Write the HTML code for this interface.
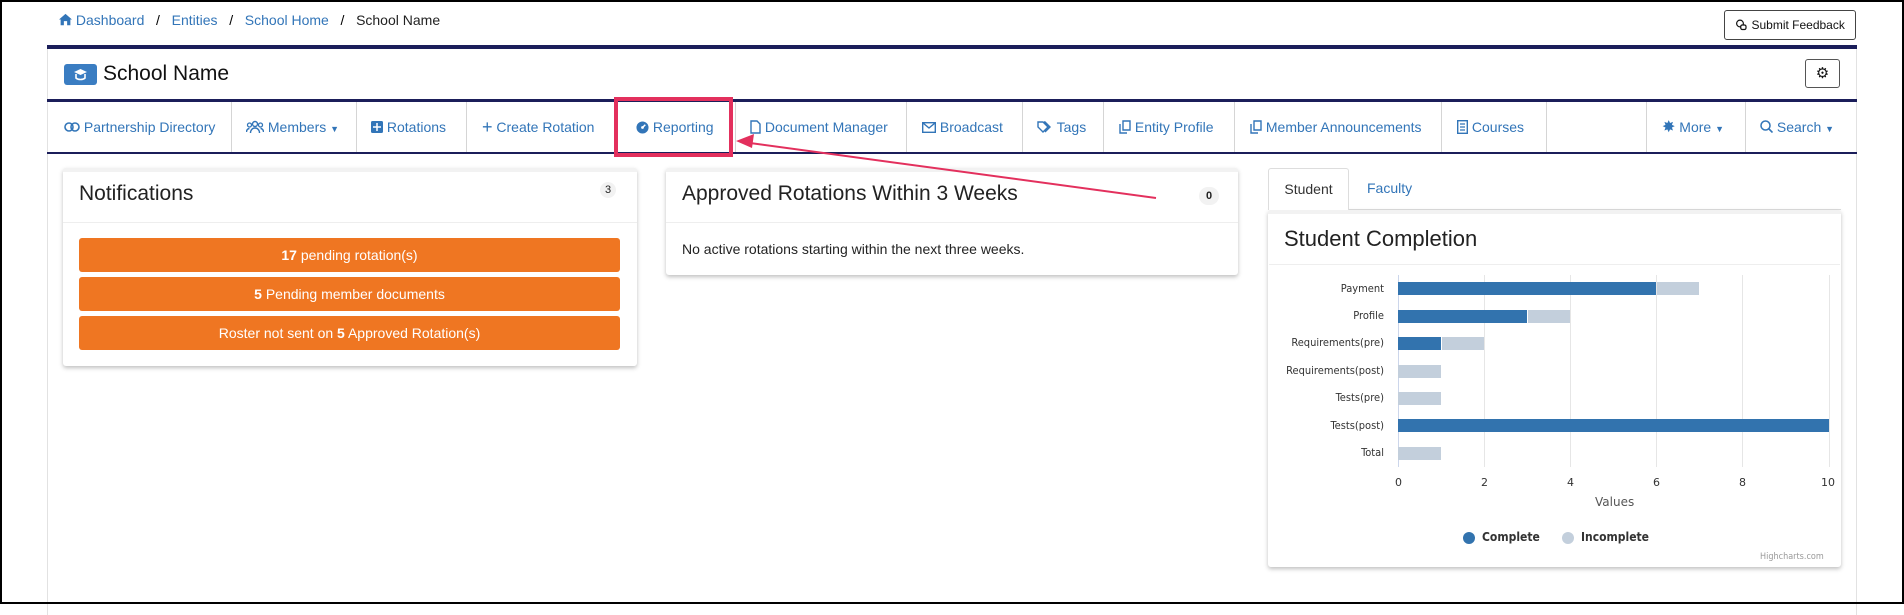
<!DOCTYPE html>
<html><head><meta charset="utf-8"><style>
*{box-sizing:border-box;margin:0;padding:0}
body{width:1904px;height:604px;overflow:hidden;background:#fff;font-family:"Liberation Sans",sans-serif;position:relative}
.a{position:absolute}
.blue{color:#3275b8}
.nav{position:absolute;top:102px;height:50px;left:48px;width:1808px}
.ni{position:absolute;top:0;height:50px;line-height:50px;font-size:14px;color:#3275b8;white-space:nowrap}
.sep{position:absolute;top:0;width:1px;height:50px;background:#d5d5d5}
.btn{position:absolute;left:79px;width:541px;height:34px;background:#ef7622;border-radius:3px;color:#fff;font-size:14px;text-align:center;line-height:34px}
.lbl{position:absolute;font-size:11px;color:#333;text-align:right;width:140px;font-family:"DejaVu Sans Condensed","DejaVu Sans",sans-serif}
.bar{position:absolute;height:13px}
.c{background:#3273ae}.i{background:#c3cfdc}
.tick{position:absolute;top:476px;font-size:11px;color:#333;font-family:"DejaVu Sans",sans-serif}
.grid{position:absolute;top:275px;height:192px;width:1px;background:#e6e6e6}
</style></head><body>
<div class="a" style="left:0;top:0;width:1904px;height:604px;border:2px solid #000;z-index:50;pointer-events:none"></div>
<div class="a" style="left:59px;top:12px;font-size:14px;white-space:nowrap">
<svg width="13" height="13" viewBox="0 0 16 16" style="vertical-align:-1px"><path d="M8 1L0 8h2v7h4v-5h4v5h4V8h2z" fill="#3275b8"/></svg>
<span class="blue">Dashboard</span>&nbsp;&nbsp; / &nbsp;&nbsp;<span class="blue">Entities</span>&nbsp;&nbsp; / &nbsp;&nbsp;<span class="blue">School Home</span>&nbsp;&nbsp; / &nbsp;&nbsp;<span style="color:#222">School Name</span></div>
<div class="a" style="left:1724px;top:10px;width:132px;height:30px;border:1px solid #444;border-radius:3px;font-size:12px;line-height:28px;text-align:center;color:#111">
<svg width="13" height="12" viewBox="0 0 16 16" style="vertical-align:-2px"><circle cx="6" cy="6" r="4.5" fill="none" stroke="#111" stroke-width="1.6"/><rect x="7" y="8" width="7" height="6" rx="2" fill="#fff" stroke="#111" stroke-width="1.6"/></svg> Submit Feedback</div>
<div class="a" style="left:47px;top:45px;width:1810px;height:570px;border-left:1px solid #e2e2e2;border-right:1px solid #e2e2e2"></div>
<div class="a" style="left:47px;top:45px;width:1810px;height:4px;background:#1b1e5a"></div>
<div class="a" style="left:64px;top:64px;width:33px;height:21px;background:#3a7dc2;border-radius:3px"><svg width="33" height="21" viewBox="0 0 33 21"><path d="M10 8l6.5-3 6.5 3-6.5 3z" fill="#fff"/><path d="M12 10v4c2 2 7 2 9 0v-4" fill="none" stroke="#fff" stroke-width="1.6"/></svg></div>
<div class="a" style="left:103px;top:62px;font-size:21px;color:#111">School Name</div>
<div class="a" style="left:1805px;top:59px;width:35px;height:29px;border:1px solid #555;border-radius:3px;text-align:center;line-height:27px;font-size:15px;color:#111">⚙</div>
<div class="a" style="left:47px;top:99px;width:1810px;height:3px;background:#1b1e5a"></div>
<div class="a" style="left:47px;top:152px;width:1810px;height:2px;background:#1b1e5a"></div>
<div class="nav">
<div class="ni" style="left:16px"><svg width="16" height="14" viewBox="0 0 16 14" style="vertical-align:-2px"><rect x="1" y="3" width="8" height="8" rx="4" fill="none" stroke="#3275b8" stroke-width="1.6"/><rect x="7" y="3" width="8" height="8" rx="4" fill="none" stroke="#3275b8" stroke-width="1.6"/></svg> Partnership Directory</div>
<div class="sep" style="left:183px"></div>
<div class="ni" style="left:198px"><svg width="18" height="14" viewBox="0 0 18 14" style="vertical-align:-2px"><circle cx="9" cy="4" r="2.5" fill="none" stroke="#3275b8" stroke-width="1.4"/><circle cx="3.5" cy="5" r="2" fill="none" stroke="#3275b8" stroke-width="1.3"/><circle cx="14.5" cy="5" r="2" fill="none" stroke="#3275b8" stroke-width="1.3"/><path d="M4.5 13c0-3 2-5 4.5-5s4.5 2 4.5 5M0.5 12c0-2 1.3-3.5 3-3.5M17.5 12c0-2-1.3-3.5-3-3.5" fill="none" stroke="#3275b8" stroke-width="1.4"/></svg> Members <span style="font-size:9px">▼</span></div>
<div class="sep" style="left:308px"></div>
<div class="ni" style="left:323px"><svg width="12" height="12" viewBox="0 0 12 12" style="vertical-align:-1px"><rect width="12" height="12" rx="1.5" fill="#3275b8"/><path d="M6 2v8M2 6h8" stroke="#fff" stroke-width="1.5"/></svg> Rotations</div>
<div class="sep" style="left:418px"></div>
<div class="ni" style="left:434px"><span style="font-size:18px;vertical-align:-1px">+</span> Create Rotation</div>
<div class="sep" style="left:566px"></div>
<div class="ni" style="left:588px"><svg width="13" height="13" viewBox="0 0 14 14" style="vertical-align:-2px"><circle cx="7" cy="7" r="6.5" fill="#3275b8"/><path d="M7 7l3-3" stroke="#fff" stroke-width="1.6"/><circle cx="7" cy="7" r="1.5" fill="#fff"/></svg> Reporting</div>
<div class="sep" style="left:687px"></div>
<div class="ni" style="left:702px"><svg width="11" height="14" viewBox="0 0 11 14" style="vertical-align:-2px"><path d="M1 1h6l3 3v9H1z" fill="none" stroke="#3275b8" stroke-width="1.4"/></svg> Document Manager</div>
<div class="sep" style="left:858px"></div>
<div class="ni" style="left:874px"><svg width="14" height="11" viewBox="0 0 14 11" style="vertical-align:-1px"><rect x="0.7" y="0.7" width="12.6" height="9.6" fill="none" stroke="#3275b8" stroke-width="1.4"/><path d="M1 1l6 5 6-5" fill="none" stroke="#3275b8" stroke-width="1.4"/></svg> Broadcast</div>
<div class="sep" style="left:974px"></div>
<div class="ni" style="left:989px"><svg width="16" height="12" viewBox="0 0 16 12" style="vertical-align:-1px"><path d="M1 1h5l5 5-5 5-5-5z M7 1h1l5 5-5 5" fill="none" stroke="#3275b8" stroke-width="1.4"/></svg> Tags</div>
<div class="sep" style="left:1055px"></div>
<div class="ni" style="left:1071px"><svg width="12" height="14" viewBox="0 0 12 14" style="vertical-align:-2px"><path d="M4 1h7v9H4zM1 4v9h7" fill="none" stroke="#3275b8" stroke-width="1.4"/></svg> Entity Profile</div>
<div class="sep" style="left:1186px"></div>
<div class="ni" style="left:1202px"><svg width="12" height="14" viewBox="0 0 12 14" style="vertical-align:-2px"><path d="M4 1h7v9H4zM1 4v9h7" fill="none" stroke="#3275b8" stroke-width="1.4"/></svg> Member Announcements</div>
<div class="sep" style="left:1393px"></div>
<div class="ni" style="left:1409px"><svg width="11" height="14" viewBox="0 0 11 14" style="vertical-align:-2px"><rect x="0.7" y="0.7" width="9.6" height="12.6" fill="none" stroke="#3275b8" stroke-width="1.4"/><path d="M3 4h5M3 7h5M3 10h5" stroke="#3275b8" stroke-width="1.3"/></svg> Courses</div>
<div class="sep" style="left:1498px"></div>
<div class="sep" style="left:1598px"></div>
<div class="ni" style="left:1614px"><span style="font-size:16px">✸</span> More <span style="font-size:9px">▼</span></div>
<div class="sep" style="left:1697px"></div>
<div class="ni" style="left:1712px"><svg width="13" height="13" viewBox="0 0 13 13" style="vertical-align:-1px"><circle cx="5.5" cy="5.5" r="4.5" fill="none" stroke="#3275b8" stroke-width="1.5"/><path d="M9 9l3.5 3.5" stroke="#3275b8" stroke-width="1.6"/></svg> Search <span style="font-size:9px">▼</span></div>
</div>
<div class="a" style="left:614px;top:97px;width:119px;height:60px;border:4px solid #e3305d;z-index:10"></div>
<svg class="a" style="left:0;top:0;z-index:11" width="1904" height="604"><line x1="1156" y1="198" x2="750" y2="143" stroke="#e3305d" stroke-width="2"/><path d="M736 141l18-7-2 14z" fill="#e3305d"/></svg>
<div class="a" style="left:63px;top:168px;width:574px;height:198px;border-top:4px solid #f2f2f2;box-shadow:0 2px 4px rgba(0,0,0,.25);border-radius:3px;background:#fff"></div>
<div class="a" style="left:79px;top:182px;font-size:21px;color:#222">Notifications</div>
<div class="a" style="left:600px;top:182px;width:16px;height:16px;border-radius:8px;background:#f2f2f2;font-size:11px;text-align:center;line-height:16px;color:#222">3</div>
<div class="a" style="left:63px;top:222px;width:574px;height:1px;background:#eee"></div>
<div class="btn" style="top:238px"><b>17</b> pending rotation(s)</div>
<div class="btn" style="top:277px"><b>5</b> Pending member documents</div>
<div class="btn" style="top:316px">Roster not sent on <b>5</b> Approved Rotation(s)</div>
<div class="a" style="left:666px;top:168px;width:572px;height:107px;border-top:4px solid #f2f2f2;box-shadow:0 2px 4px rgba(0,0,0,.25);border-radius:3px;background:#fff"></div>
<div class="a" style="left:682px;top:182px;font-size:21px;color:#222">Approved Rotations Within 3 Weeks</div>
<div class="a" style="left:1199px;top:187px;width:20px;height:18px;border-radius:9px;background:#f2f2f2;font-size:11px;font-weight:bold;text-align:center;line-height:18px;color:#222">0</div>
<div class="a" style="left:666px;top:222px;width:572px;height:1px;background:#eee"></div>
<div class="a" style="left:682px;top:241px;font-size:14px;color:#222">No active rotations starting within the next three weeks.</div>
<div class="a" style="left:1268px;top:168px;width:81px;height:42px;border:1px solid #ddd;border-bottom:none;border-radius:3px 3px 0 0;background:#fff;font-size:14px;color:#333;line-height:40px;text-align:center;z-index:2">Student</div>
<div class="a" style="left:1367px;top:180px;font-size:14px;color:#3275b8">Faculty</div>
<div class="a" style="left:1268px;top:209px;width:573px;height:1px;background:#ddd"></div>
<div class="a" style="left:1268px;top:210px;width:573px;height:357px;border-top:4px solid #f2f2f2;box-shadow:0 2px 4px rgba(0,0,0,.25);border-radius:3px;background:#fff"></div>
<div class="a" style="left:1284px;top:226px;font-size:22px;color:#222">Student Completion</div>
<div class="a" style="left:1269px;top:264px;width:571px;height:1px;background:#eee"></div>
<div class="grid" style="left:1398px;background:#ccd6eb"></div>
<div class="grid" style="left:1484px"></div><div class="grid" style="left:1570px"></div><div class="grid" style="left:1656px"></div><div class="grid" style="left:1742px"></div><div class="grid" style="left:1829px"></div>
<div class="lbl" style="left:1244px;top:282px">Payment</div>
<div class="lbl" style="left:1244px;top:309px">Profile</div>
<div class="lbl" style="left:1244px;top:336px">Requirements(pre)</div>
<div class="lbl" style="left:1244px;top:364px">Requirements(post)</div>
<div class="lbl" style="left:1244px;top:391px">Tests(pre)</div>
<div class="lbl" style="left:1244px;top:419px">Tests(post)</div>
<div class="lbl" style="left:1244px;top:446px">Total</div>
<div class="bar c" style="left:1398px;top:282px;width:258px"></div><div class="bar i" style="left:1657px;top:282px;width:42px"></div>
<div class="bar c" style="left:1398px;top:310px;width:129px"></div><div class="bar i" style="left:1528px;top:310px;width:42px"></div>
<div class="bar c" style="left:1398px;top:337px;width:43px"></div><div class="bar i" style="left:1442px;top:337px;width:42px"></div>
<div class="bar i" style="left:1398px;top:365px;width:43px"></div>
<div class="bar i" style="left:1398px;top:392px;width:43px"></div>
<div class="bar c" style="left:1398px;top:419px;width:431px"></div>
<div class="bar i" style="left:1398px;top:447px;width:43px"></div>
<div class="tick" style="left:1395px">0</div><div class="tick" style="left:1481px">2</div><div class="tick" style="left:1567px">4</div><div class="tick" style="left:1653px">6</div><div class="tick" style="left:1739px">8</div><div class="tick" style="left:1821px">10</div>
<div class="a" style="left:1595px;top:495px;font-size:12px;color:#555;font-family:'DejaVu Sans',sans-serif">Values</div>
<div class="a" style="left:1463px;top:532px;width:12px;height:12px;border-radius:6px;background:#3273ae"></div>
<div class="a" style="left:1482px;top:530px;font-size:12px;font-weight:bold;color:#333;font-family:'DejaVu Sans Condensed','DejaVu Sans',sans-serif">Complete</div>
<div class="a" style="left:1562px;top:532px;width:12px;height:12px;border-radius:6px;background:#c3cfdc"></div>
<div class="a" style="left:1581px;top:530px;font-size:12px;font-weight:bold;color:#333;font-family:'DejaVu Sans Condensed','DejaVu Sans',sans-serif">Incomplete</div>
<div class="a" style="left:1760px;top:552px;font-size:9px;color:#999;font-family:'DejaVu Sans Condensed','DejaVu Sans',sans-serif">Highcharts.com</div>
</body></html>
